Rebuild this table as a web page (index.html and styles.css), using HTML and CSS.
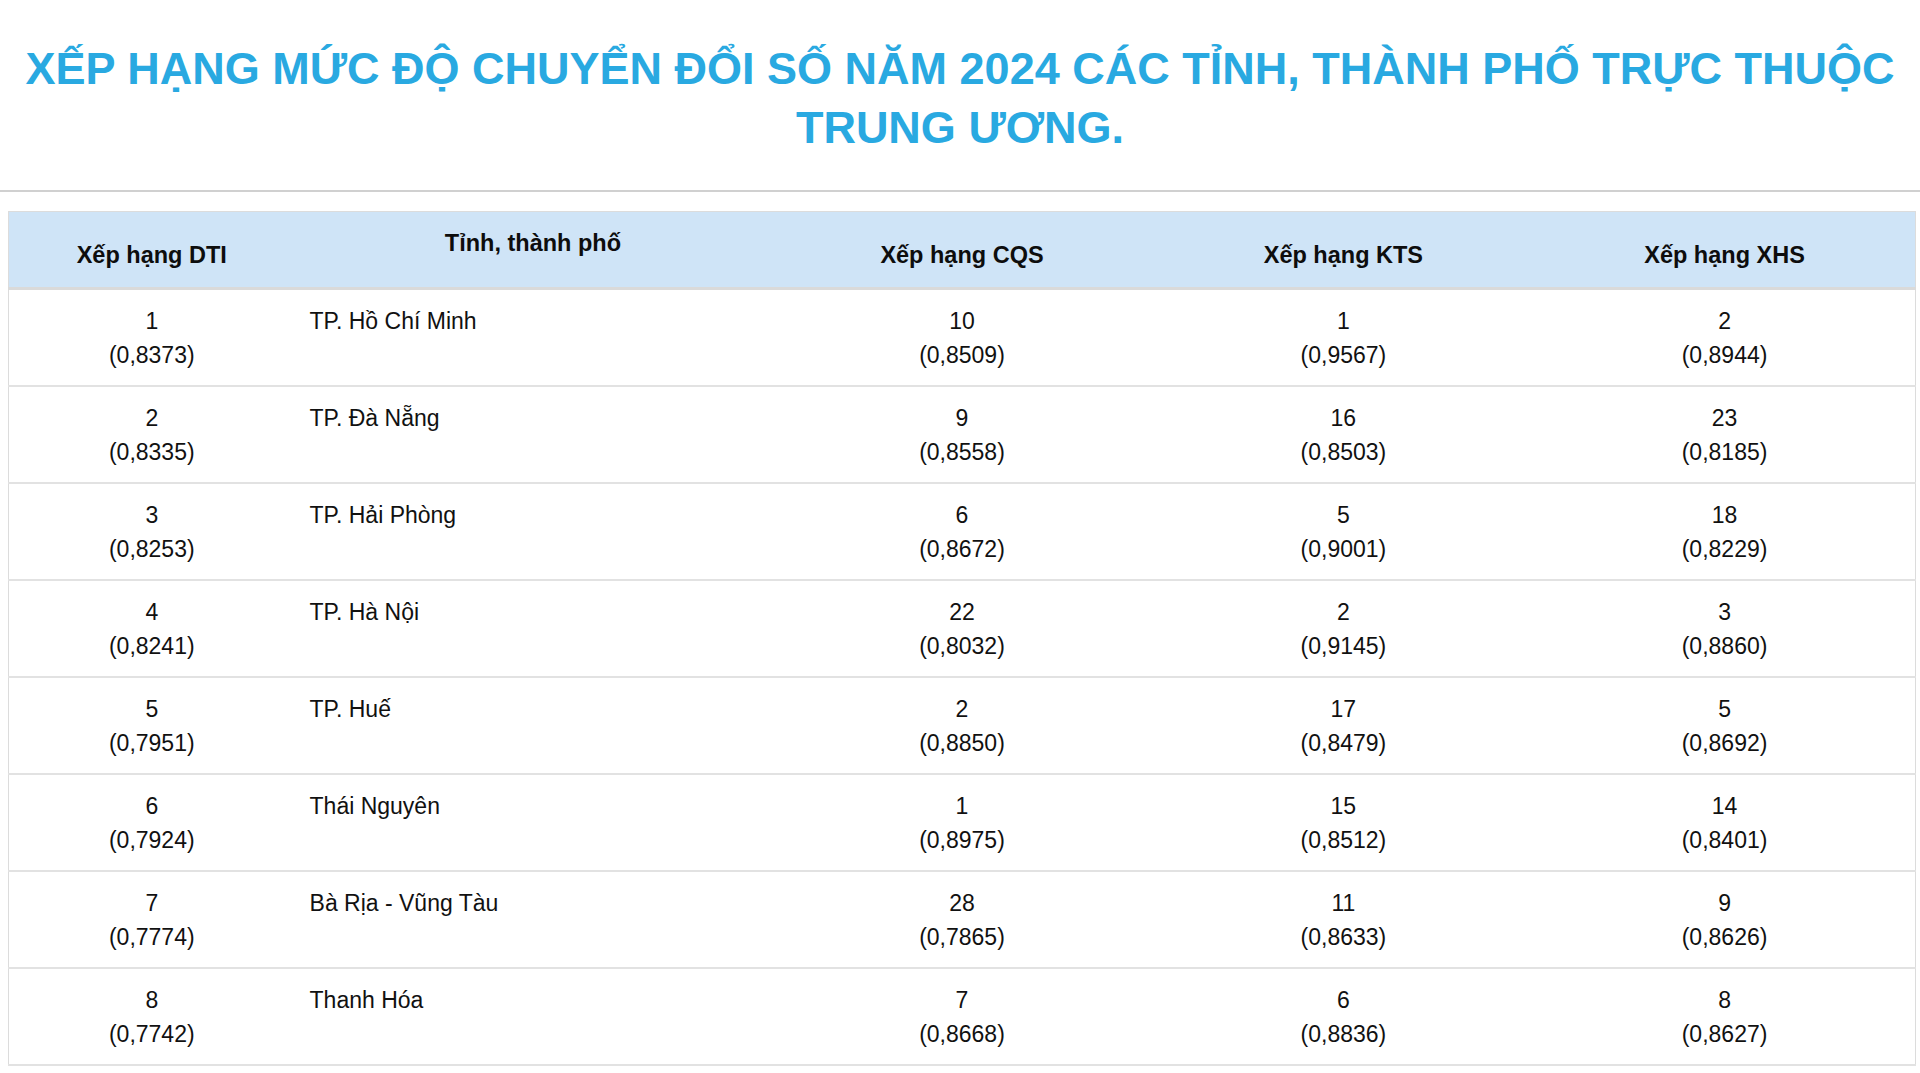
FILE: index.html
```html
<!DOCTYPE html>
<html lang="vi">
<head>
<meta charset="utf-8">
<title>Xếp hạng DTI 2024</title>
<link rel="stylesheet" href="styles.css">
</head>
<body>
<h1 class="title">XẾP HẠNG MỨC ĐỘ CHUYỂN ĐỔI SỐ NĂM 2024 CÁC TỈNH, THÀNH PHỐ TRỰC THUỘC TRUNG ƯƠNG.</h1>
<hr class="divider">
<div class="table-wrap">
<table class="rank-table">
<colgroup>
<col class="c1"><col class="c2"><col class="c3"><col class="c4"><col class="c5">
</colgroup>
<thead>
<tr>
<th>Xếp hạng DTI</th>
<th class="th-top">Tỉnh, thành phố</th>
<th>Xếp hạng CQS</th>
<th>Xếp hạng KTS</th>
<th>Xếp hạng XHS</th>
</tr>
</thead>
<tbody>
<tr><td>1<br>(0,8373)</td><td class="name">TP. Hồ Chí Minh</td><td>10<br>(0,8509)</td><td>1<br>(0,9567)</td><td>2<br>(0,8944)</td></tr>
<tr><td>2<br>(0,8335)</td><td class="name">TP. Đà Nẵng</td><td>9<br>(0,8558)</td><td>16<br>(0,8503)</td><td>23<br>(0,8185)</td></tr>
<tr><td>3<br>(0,8253)</td><td class="name">TP. Hải Phòng</td><td>6<br>(0,8672)</td><td>5<br>(0,9001)</td><td>18<br>(0,8229)</td></tr>
<tr><td>4<br>(0,8241)</td><td class="name">TP. Hà Nội</td><td>22<br>(0,8032)</td><td>2<br>(0,9145)</td><td>3<br>(0,8860)</td></tr>
<tr><td>5<br>(0,7951)</td><td class="name">TP. Huế</td><td>2<br>(0,8850)</td><td>17<br>(0,8479)</td><td>5<br>(0,8692)</td></tr>
<tr><td>6<br>(0,7924)</td><td class="name">Thái Nguyên</td><td>1<br>(0,8975)</td><td>15<br>(0,8512)</td><td>14<br>(0,8401)</td></tr>
<tr><td>7<br>(0,7774)</td><td class="name">Bà Rịa - Vũng Tàu</td><td>28<br>(0,7865)</td><td>11<br>(0,8633)</td><td>9<br>(0,8626)</td></tr>
<tr><td>8<br>(0,7742)</td><td class="name">Thanh Hóa</td><td>7<br>(0,8668)</td><td>6<br>(0,8836)</td><td>8<br>(0,8627)</td></tr>
</tbody>
</table>
</div>
</body>
</html>
```
FILE: styles.css
```css
html, body {
  margin: 0;
  padding: 0;
  background: #ffffff;
}

body {
  font-family: "Liberation Sans", Arial, Helvetica, sans-serif;
  color: #111111;
}

.title {
  margin: 39px 8px 0 8px;
  font-size: 45px;
  line-height: 59px;
  font-weight: 700;
  color: #29a9e1;
  text-align: center;
}

.divider {
  margin: 33px 0 0 0;
  border: 0;
  height: 2px;
  background: #d0d0d0;
}

.table-wrap {
  padding: 19px 4px 0 8px;
}

.rank-table {
  width: 100%;
  border-collapse: collapse;
  table-layout: fixed;
  border: 1px solid #dcdcdc;
  border-bottom: 0;
}

.c1 { width: 15%; }
.c2 { width: 25%; }
.c3 { width: 20%; }
.c4 { width: 20%; }
.c5 { width: 20%; }

.rank-table th {
  background: #cfe4f7;
  font-size: 23.5px;
  line-height: 34px;
  font-weight: 700;
  color: #0d0d0d;
  text-align: center;
  vertical-align: top;
  padding: 26px 15px 15px;
  border-bottom: 3px solid #dadada;
}

.rank-table th.th-top {
  padding-top: 14px;
}

.rank-table td {
  font-size: 23px;
  line-height: 34px;
  text-align: center;
  vertical-align: top;
  padding: 14px 15px 13px;
  border-bottom: 2px solid #e2e2e2;
}

.rank-table td.name {
  text-align: left;
}
```
